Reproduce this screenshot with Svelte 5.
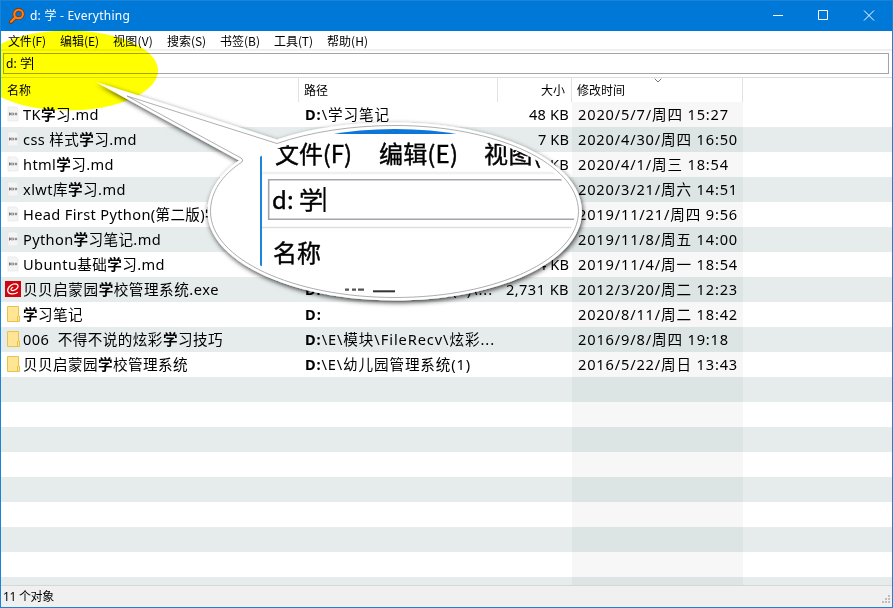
<script>
  const menus = [
    ['文件(F)', 38], ['编辑(E)', 39], ['视图(V)', 40], ['搜索(S)', 39],
    ['书签(B)', 40], ['工具(T)', 39], ['帮助(H)', 41]
  ];

  const rows = [
    { icon: 'md', name: 'TK*学*习.md', nw: 76, path: '\\学习笔记', pw: 85, size: '48 KB', sw: 40, date: '2020/5/7/周四 15:27', dw: 151 },
    { icon: 'md', name: 'css 样式*学*习.md', nw: 114, size: '7 KB', sw: 31, date: '2020/4/30/周四 16:50', dw: 160 },
    { icon: 'md', name: 'html*学*习.md', nw: 91, size: 'KB', sw: 19, date: '2020/4/1/周三 18:54', dw: 151 },
    { icon: 'md', name: 'xlwt库*学*习.md', nw: 103, date: '2020/3/21/周六 14:51', dw: 160 },
    { icon: 'md', name: 'Head First Python(第二版)*学*', nw: 197, date: '2019/11/21/周四 9:56', dw: 160 },
    { icon: 'md', name: 'Python*学*习笔记.md', nw: 138, date: '2019/11/8/周五 14:00', dw: 160 },
    { icon: 'md', name: 'Ubuntu基础*学*习.md', nw: 142, size: '4 KB', sw: 31, date: '2019/11/4/周一 18:54', dw: 160 },
    { icon: 'exe', name: '贝贝启蒙园*学*校管理系统.exe', nw: 196, path: '\\E\\幼儿园管理系统(1)\\...', pw: 188, size: '2,731 KB', sw: 63, date: '2012/3/20/周二 12:23', dw: 160 },
    { icon: 'dir', name: '*学*习笔记', nw: 60, path: '', pw: 17, date: '2020/8/11/周二 18:42', dw: 160 },
    { icon: 'dir', name: '006  不得不说的炫彩*学*习技巧', nw: 200, path: '\\E\\模块\\FileRecv\\炫彩...', pw: 190, date: '2016/9/8/周四 19:18', dw: 151 },
    { icon: 'dir', name: '贝贝启蒙园*学*校管理系统', nw: 165, path: '\\E\\幼儿园管理系统(1)', pw: 166, date: '2016/5/22/周日 13:43', dw: 160 }
  ];
  const blanks = Array.from({ length: 9 }, (_, i) => i);

  // Spreads letter spacing so that the text takes the given width.
  function fit(node, width) {
    const n = node.textContent.length;
    const w = node.getBoundingClientRect().width;
    if (n && width) node.style.letterSpacing = (width - w) / n + 'px';
  }
</script>

<div class="window">
  <header class="title">
    <svg class="logo" width="16" height="16" viewBox="0 0 16 16">
      <path d="M6.2 9.6 1.8 14" stroke="#7c3a10" stroke-width="4" stroke-linecap="round" />
      <circle cx="9.6" cy="6" r="4.3" fill="#0873cc" stroke="#7c3a10" stroke-width="3.6" />
      <path d="M6.4 9.4 2 13.8" stroke="#ff7e14" stroke-width="2.2" stroke-linecap="round" />
      <circle cx="9.6" cy="6" r="4.3" fill="none" stroke="#ff7e14" stroke-width="2.1" />
    </svg>
    <span class="caption"><span class="t" use:fit={100}>d: 学 - Everything</span></span>
    <svg class="controls" width="138" height="30" viewBox="0 0 138 30" fill="none" stroke="#fff">
      <path d="M18 14.500h10M63.500 9.500h9v9h-9zM109 9.500l10 10M119 9.500l-10 10" />
    </svg>
  </header>

  <nav class="menu">
    {#each menus as [label, w]}
      <span class="item"><span class="t" use:fit={w}>{label}</span></span>
    {/each}
  </nav>

  <div class="searchbar">
    <div class="field"><span class="t" use:fit={26}>d: 学</span><i class="caret"></i></div>
  </div>

  <div class="head">
    <div class="c name">名称</div>
    <div class="c path">路径</div>
    <div class="c size">大小</div>
    <div class="c date">修改时间
      <svg class="sort" width="8" height="5" viewBox="0 0 8 5" fill="none" stroke="#777"><path d="M.7.7 4 4 7.3.7" /></svg>
    </div>
  </div>

  <main class="list">
    {#each rows as r}
      <div class="row">
        <div class="c name">
          <span class="icon">
            {#if r.icon === 'md'}
              <svg width="16" height="16" viewBox="0 0 16 16">
                <path d="M3 1h8l2 2v12H3z" fill="#f4f4f4" stroke="#e7e7e7" stroke-width=".7" />
                <path d="M4.500 6.500v3M5.700 6.800v2.200M7 6.500v3M8.700 6.800v2.400M11 6.600v2.700M9.900 8h2.300" stroke="#666" stroke-width=".9" />
              </svg>
            {:else if r.icon === 'exe'}
              <svg width="16" height="16" viewBox="0 0 16 16" fill="none" stroke="#fff">
                <path d="M0 0h16v16H0z" fill="#d0040c" stroke="none" />
                <path d="M12.800 11.300C9 14 3.200 13.300 2.700 9.800 2.300 5.500 8 2 11.500 3.100 15 4.500 12 9 8 9.600 5.200 9.900 5.300 7.200 8.200 6.300" stroke-width="1.200" />
              </svg>
            {:else}
              <svg width="16" height="16" viewBox="0 0 16 16">
                <path d="M2.500.500h11v9.500h1v5.500h-12z" fill="#ffe594" stroke="#e8c34b" />
                <path d="M12.500 15v-5" stroke="#e8c34b" />
              </svg>
            {/if}
          </span>
          <span class="t" use:fit={r.nw}>{#each r.name.split('*') as part, i}{#if i === 1}<b>{part}</b>{:else}{part}{/if}{/each}</span>
        </div>
        <div class="c path">{#if r.path !== undefined}<span class="t" use:fit={r.pw}><b>D:</b>{r.path}</span>{/if}</div>
        <div class="c size">{#if r.size}<span class="t" use:fit={r.sw}>{r.size}</span>{/if}</div>
        <div class="c date"><span class="t" use:fit={r.dw}>{r.date}</span></div>
      </div>
    {/each}
    {#each blanks as b (b)}
      <div class="row"><div class="c name"></div><div class="c path"></div><div class="c size"></div><div class="c date"></div></div>
    {/each}
  </main>

  <footer class="status">
    <span class="t" use:fit={51}>11 个对象</span>
    <svg class="grip" width="9" height="9" viewBox="0 0 9 9" fill="#bfbfbf">
      <path d="M7 0h2v2H7zM4 3h2v2H4zM7 3h2v2H7zM1 6h2v2H1zM4 6h2v2H4zM7 6h2v2H7z" />
    </svg>
  </footer>

  <svg class="overlay marker" width="893" height="608"><ellipse cx="68" cy="70.500" rx="90" ry="40" fill="#ff0" /></svg>

  <svg class="overlay" width="893" height="608">
    <defs>
      <clipPath id="lens"><ellipse cx="395" cy="211" rx="180" ry="82" /></clipPath>
      <filter id="shade" x="-10%" y="-10%" width="120%" height="125%">
        <feDropShadow dx="1" dy="2" stdDeviation="2.500" flood-color="#000" flood-opacity=".75" />
      </filter>
      <filter id="soft" filterUnits="userSpaceOnUse" x="200" y="100" width="400" height="220"><feGaussianBlur stdDeviation=".6" /></filter>
    </defs>
    <path d="M96 82 277 139.500C310 128 350 122.500 395 122.500C499 122.500 582 162 582 211.500S499 300.500 395 300.500 207.500 261 207.500 211.500C207.500 192 219 174 239 160.500Z" fill="#fff" filter="url(#shade)" />
    <path d="M127 96 277 143.500C310 132 352 125.500 395 125.500C497 125.500 578.500 164 578.500 211.500S497 297.500 395 297.500 210.500 259 210.500 211.500C210.500 192 222 175 242 162Q244 160 241 158Z" fill="#fff" stroke="#999" stroke-width=".8" />
    <g clip-path="url(#lens)" class="zoomed">
      <path d="M261 125h325v9H261z" fill="#0876d8" filter="url(#soft)" />
      <path d="M261 130v150" stroke="#1c84dc" stroke-width="2" />
      <path d="M262 173h325" stroke="#f0f0f0" stroke-width="2.500" />
      <path d="M590 179.700H268.700v39.500H590" fill="none" stroke="#a3a3ad" stroke-width="1.600" />
      <path d="M262 227.500h325" stroke="#dedede" stroke-width="1.500" />
      <g class="bold">
        <text x="275" y="163" textLength="77">文件(F)</text>
        <text x="379" y="163" textLength="79">编辑(E)</text>
        <text x="484" y="163" textLength="80">视图(V)</text>
        <text x="272" y="209" textLength="51">d: 学</text>
        <text x="273" y="262" textLength="48">名称</text>
      </g>
      <path d="M324.500 187v25" stroke="#000" stroke-width="2" />
    </g>
    <path d="M373 291.300h22" stroke="#333" stroke-width="2" filter="url(#soft)" />
    <path d="M345 289.700h4m3 0h4m2 0h6" stroke="#555" stroke-width="2.200" filter="url(#soft)" />
  </svg>
</div>

<style>
  :global(body) { margin: 0; overflow: hidden; }
  .window {
    position: relative; box-sizing: border-box; width: 893px; height: 608px;
    display: flex; flex-direction: column; overflow: hidden;
    border: 1px solid #1883d7; background: #fff; color: #000;
    font: 12px/16px "Noto Sans", "Noto Sans CJK SC", sans-serif;
  }
  .t { display: inline-block; white-space: pre; }
  .title { height: 30px; display: flex; align-items: center; background: #0078d7; color: #fff; flex: none; }
  .logo { margin-left: 8px; fill: none; }
  .caption { margin-left: 5px; flex: 1; }
  .controls { margin-right: -1px; }
  .menu {
    height: 18px; flex: none; display: flex; align-items: center; gap: 14px; padding-left: 7px;
    border-bottom: 2px solid #f0f0f0; font-family: "Noto Sans CJK SC", sans-serif; line-height: 18px;
  }
  .item { display: block; padding-top: 1px; }
  .searchbar { height: 27px; flex: none; box-sizing: border-box; padding: 2px 3px 0 2px; border-bottom: 1px solid #dcdcdc; }
  .field {
    box-sizing: border-box; height: 21px; border: 1px solid #a4a4ac; padding-left: 2px;
    display: flex; align-items: center;
  }
  .caret { width: 1px; height: 13px; background: #000; }
  .head { height: 24px; flex: none; display: flex; font-family: "Noto Sans CJK SC", sans-serif; line-height: 24px; }
  .c { box-sizing: border-box; flex: none; overflow: hidden; white-space: nowrap; }
  .head .c { border-right: 1px solid #e2e2e2; }
  .name { width: 298px; padding-left: 4px; display: flex; align-items: center; }
  .head .name { padding-left: 6px; }
  .path { width: 199px; padding-left: 6px; }
  .head .path { padding-left: 5px; }
  .size { width: 74px; padding-right: 3px; text-align: right; }
  .head .size { padding-right: 6px; }
  .date { width: 171px; padding-left: 6px; }
  .head .date { position: relative; padding-left: 5px; }
  .sort { position: absolute; left: 82px; top: 0; }
  .list { flex: 1; min-height: 0; overflow: hidden; font-size: 14.600px; line-height: 25px; }
  .row { height: 25px; display: flex; }
  .row:nth-child(even) { background: #e6ecec; }
  .row .date { background: #f7f7f7; }
  .row:nth-child(even) .date { background: #dde4e4; }
  .icon { width: 18px; height: 16px; flex: none; margin-top: -1px; display: flex; }
  .status {
    height: 21px; flex: none; display: flex; align-items: center; justify-content: space-between;
    background: #f0f0f0; border-top: 1px solid #d7d7d7; padding-left: 2px;
  }
  .status .t { padding-top: 1px; }
  .grip { margin: 6px 2px 0 0; }
  .overlay { position: absolute; left: -1px; top: -1px; pointer-events: none; }
  .marker { mix-blend-mode: multiply; }
  .zoomed text { font: 24px "Noto Sans CJK SC", sans-serif; fill: #000; }
  .bold { stroke: #000; stroke-width: .4px; }
</style>
